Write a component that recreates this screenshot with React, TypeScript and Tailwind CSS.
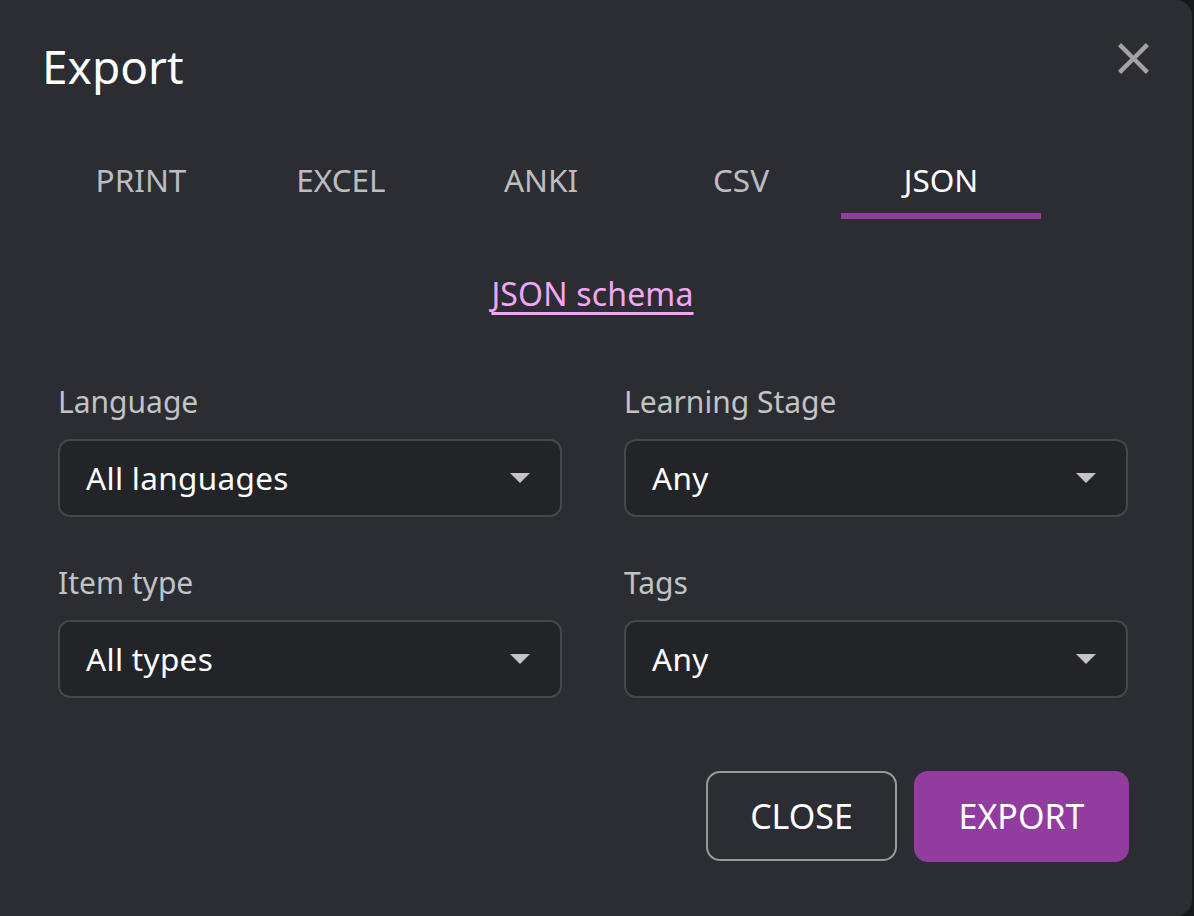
import React from "react";

const tabs = ["PRINT", "EXCEL", "ANKI", "CSV", "JSON"];

function Caret() {
  return (
    <svg width="20" height="10" viewBox="0 0 20 10" className="shrink-0">
      <path d="M0 0 L20 0 L10 10 Z" fill="#c4c4c4" />
    </svg>
  );
}

function Field({ label, value }: { label: string; value: string }) {
  return (
    <div className="flex flex-col">
      <div className="h-[40px] flex items-center text-[30px] text-[#c2c3c6]">{label}</div>
      <div className="mt-[18px] h-[78px] rounded-[12px] border-2 border-[#45474c] bg-[#222428] flex items-center justify-between pl-[26px] pr-[30px]">
        <span className="text-[31.5px] tracking-[0.01em] text-white">{value}</span>
        <Caret />
      </div>
    </div>
  );
}

export default function App() {
  return (
    <div
      className="w-[1194px] h-[916px] bg-[#17181a] overflow-hidden"
      style={{ fontFamily: '"Noto Sans", "Open Sans", sans-serif' }}
    >
      <div className="w-[1192px] h-[916px] bg-[#2c2d32] rounded-r-[16px] flex flex-col">
        {/* Header */}
        <div className="pt-[40px] pl-[42px] pr-[32px] h-[96px] flex items-center justify-between">
          <h1 className="text-[46px] text-white leading-none -mt-[4px]">Export</h1>
          <svg width="53" height="53" viewBox="0 0 24 24" className="mb-[20px]">
            <path
              fill="#a3a3a3"
              d="M19 6.41 17.59 5 12 10.59 6.41 5 5 6.41 10.59 12 5 17.59 6.41 19 12 13.41 17.59 19 19 17.59 13.41 12z"
            />
          </svg>
        </div>

        {/* Tabs */}
        <div className="mt-[45px] pl-[41px] flex">
          {tabs.map((t) => {
            const active = t === "JSON";
            return (
              <div
                key={t}
                className={
                  "relative w-[200px] h-[78px] flex items-center justify-center text-[31.5px] " +
                  (active ? "text-white" : "text-[#bcbdc0]")
                }
              >
                <span className="mt-[-1px]">{t}</span>
                {active && (
                  <div className="absolute left-0 right-0 bottom-0 h-[6px] bg-[#913c9e]" />
                )}
              </div>
            );
          })}
        </div>

        {/* Link */}
        <div className="mt-[53px] h-[44px] pr-[7px] flex items-center justify-center">
          <a className="text-[32px] tracking-[0.005em] text-[#f2a6f6] underline underline-offset-[6px] decoration-[3px]">
            JSON schema
          </a>
        </div>

        {/* Form */}
        <div className="mt-[65px] pl-[58px] pr-[64px] grid grid-cols-2 gap-x-[62px] gap-y-[45px]">
          <Field label="Language" value="All languages" />
          <Field label="Learning Stage" value="Any" />
          <Field label="Item type" value="All types" />
          <Field label="Tags" value="Any" />
        </div>

        {/* Buttons */}
        <div className="mt-[73px] pr-[63px] flex justify-end gap-[17px]">
          <button className="w-[191px] h-[90px] rounded-[14px] border-2 border-[#98999b] text-white text-[34px]">
            CLOSE
          </button>
          <button className="w-[215px] h-[91px] rounded-[14px] bg-[#913c9e] text-white text-[34px]">
            EXPORT
          </button>
        </div>
      </div>
    </div>
  );
}
